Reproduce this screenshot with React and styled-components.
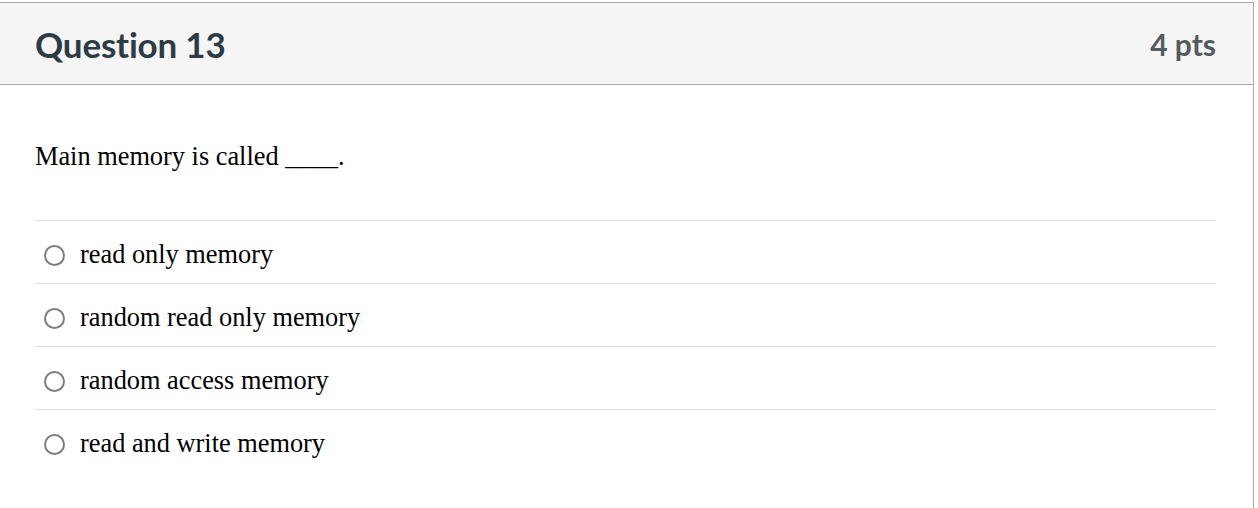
import React from "react";
import styled, { createGlobalStyle } from "styled-components";

const Global = createGlobalStyle`
  html, body { margin: 0; padding: 0; background: #fff; }
  body { overflow: hidden; }
`;

const Card = styled.div`
  box-sizing: border-box;
  width: 1255px;
  margin: 2px 0 0 -1px;
  border: 1px solid #aaaaaa;
  border-bottom: none;
  background: #fff;
`;

const Header = styled.div`
  box-sizing: border-box;
  height: 82px;
  display: flex;
  align-items: center;
  justify-content: space-between;
  padding: 0 37px 0 35px;
  background: #f5f5f5;
  border-bottom: 1px solid #aaaaaa;
  font-family: Lato, "Open Sans", sans-serif;
  font-weight: 700;
`;

const Title = styled.h2`
  margin: 0;
  font-size: 35px;
  font-weight: 700;
  color: #2d3b45;
  letter-spacing: -0.2px;
`;

const Points = styled.span`
  font-size: 30px;
  font-weight: 700;
  color: #555a5e;
`;

const Body = styled.div`
  padding: 56px 37px 40px 35px;
  font-family: "Liberation Serif", "Times New Roman", serif;
  color: #000;
`;

const Prompt = styled.p`
  margin: 0 0 47px 0;
  font-size: 26.35px;
  line-height: 32px;
`;

const Answer = styled.label`
  display: flex;
  align-items: center;
  gap: 15px;
  height: 63px;
  border-top: 1px solid #dddddd;
  box-sizing: border-box;
  padding: 6px 0 0 9px;
  font-size: 26.35px;
`;

const Radio = styled.span`
  box-sizing: border-box;
  width: 21px;
  height: 21px;
  border-radius: 50%;
  border: 2px solid #7d7d7d;
  flex: none;
`;

const answers = [
  "read only memory",
  "random read only memory",
  "random access memory",
  "read and write memory",
];

export default function App() {
  return (
    <>
      <Global />
      <Card>
        <Header>
          <Title>Question 13</Title>
          <Points>4 pts</Points>
        </Header>
        <Body>
          <Prompt>Main memory is called ____.</Prompt>
          {answers.map((a) => (
            <Answer key={a}>
              <Radio />
              <span>{a}</span>
            </Answer>
          ))}
        </Body>
      </Card>
    </>
  );
}
